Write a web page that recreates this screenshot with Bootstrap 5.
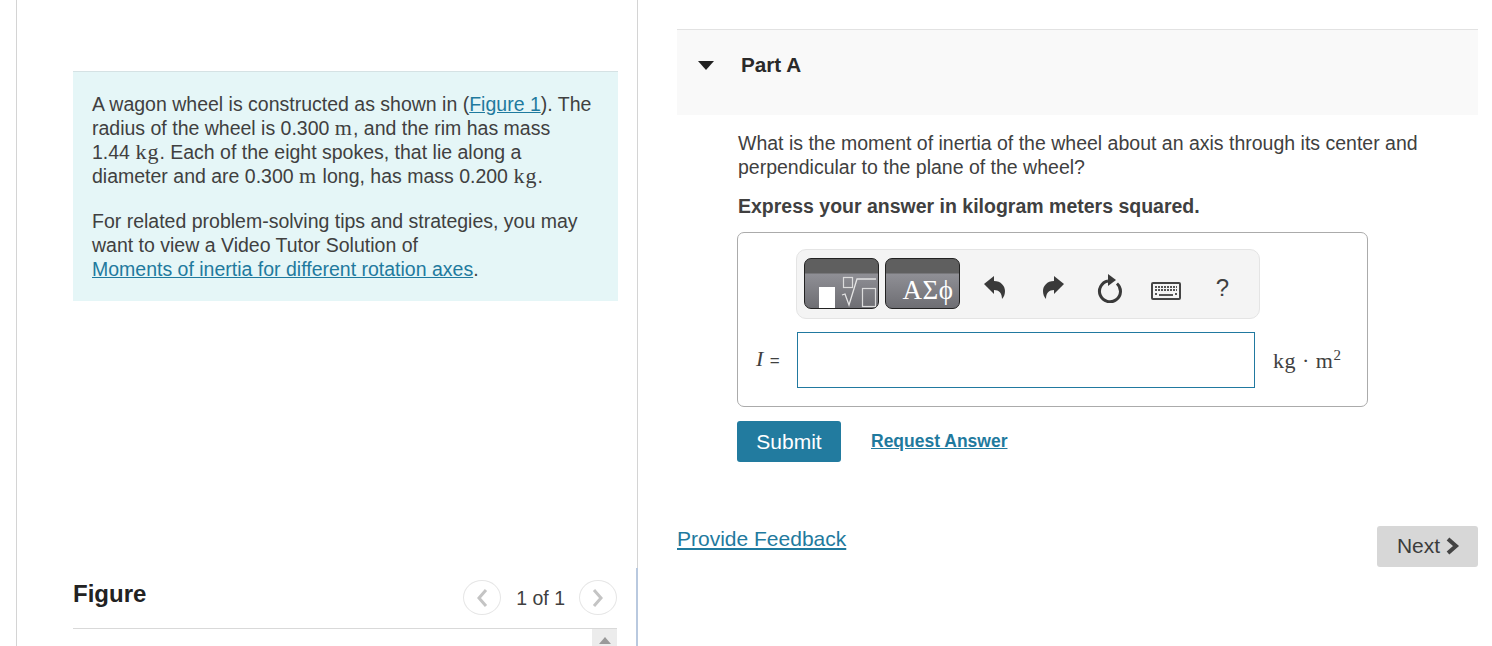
<!DOCTYPE html>
<html lang="en">
<head>
    <meta charset="UTF-8">
    <meta name="viewport" content="width=device-width, initial-scale=1.0">
    <title>Part A</title>
    <link href="https://cdn.jsdelivr.net/npm/bootstrap@5.3.0/dist/css/bootstrap.min.css" rel="stylesheet">
    <style>
        html, body {
            height: 646px;
            overflow: hidden;
        }

        body {
            font-family: "Liberation Sans", Arial, sans-serif;
            font-size: 19.5px;
            line-height: 24px;
            color: #404040;
            background: #fff;
        }

        a {
            color: #1f7a9e;
        }

        .page-wrap {
            width: 1462px;
            height: 646px;
            margin-left: 16px;
        }

        .left-pane {
            position: relative;
            width: 622px;
            flex: none;
            padding: 71px 19px 0 56px;
            border-left: 1px solid #d4d4d4;
            border-right: 1px solid #d4d4d4;
        }

        .left-pane::after {
            content: "";
            position: absolute;
            right: -1px;
            top: 568px;
            bottom: 0;
            width: 2px;
            background: #b9c9df;
        }

        .intro-box {
            height: 230px;
            padding: 20px 19px 0;
            background: #e5f6f7;
            border-top: 1px solid #d5e2e4;
        }

        .intro-box p {
            margin-bottom: 21px;
        }

        .math {
            font-family: "Liberation Serif", "DejaVu Serif", serif;
            font-size: 22px;
            line-height: 1;
            letter-spacing: 1px;
        }

        .figure-head {
            margin-top: 275px;
            margin-right: 1px;
            height: 53px;
            padding-top: 4px;
            border-bottom: 1px solid #d9d9d9;
        }

        .figure-title {
            font-size: 24px;
            font-weight: 700;
            color: #222;
            line-height: 28px;
        }

        .page-btn {
            width: 38px;
            height: 35px;
            border: 1px solid #e6e6e6;
            border-radius: 50%;
        }

        .page-count {
            margin: 6px 14px 0 15px;
        }

        .scroll-up {
            width: 25px;
            height: 17px;
            margin-right: 1px;
            background: #ececec;
        }

        .right-pane {
            padding: 29px 0 0 39px;
        }

        .part-head {
            height: 86px;
            background: #f9f9f9;
            border-top: 1px solid #e2e2e2;
            padding: 23px 0 0 21px;
        }

        .part-title {
            margin-left: 27px;
            font-size: 20.7px;
            font-weight: 700;
            color: #2a2a2a;
        }

        .part-body {
            padding: 16px 0 0 60px;
        }

        .part-body p {
            margin-bottom: 15px;
            padding-left: 1px;
        }

        .answer-box {
            width: 631px;
            height: 175px;
            margin-top: 14px;
            padding: 16px 0 0 58px;
            border: 1px solid #ababab;
            border-radius: 7px;
        }

        .tool-strip {
            width: 464px;
            height: 70px;
            padding: 8px 7px;
            background: #f4f4f4;
            border: 1px solid #e4e4e4;
            border-radius: 10px;
        }

        .palette-btn {
            position: relative;
            flex: none;
            width: 75px;
            height: 51px;
            margin-right: 6px;
            padding: 0;
            overflow: hidden;
            color: #fff;
            border: 1px solid #222;
            border-radius: 7px;
            background: linear-gradient(#5f5f5f 0, #5f5f5f 14px, #8f8f95 15px, #6e6e73 100%);
        }

        .palette-last {
            margin-right: 5px;
        }

        .palette-text {
            position: absolute;
            left: 11px;
            right: 0;
            bottom: 3px;
            font-family: "Liberation Serif", "DejaVu Serif", serif;
            font-size: 27px;
            line-height: 30px;
            letter-spacing: .5px;
            text-align: center;
        }

        .tool-icon {
            flex: none;
            margin-top: 16px;
            text-align: center;
        }

        .tool-undo {
            width: 59px;
        }

        .tool-redo {
            width: 58px;
        }

        .tool-reload {
            width: 56px;
        }

        .tool-keys {
            width: 56px;
            margin-top: 19px;
        }

        .tool-help {
            width: 57px;
            margin-top: 18px;
            font-size: 24px;
        }

        .answer-row {
            margin: 13px 0 0 -41px;
        }

        .var-label {
            width: 42px;
            padding-left: 1px;
        }

        .var-eq {
            font-size: 17px;
        }

        .answer-input {
            width: 458px;
            height: 56px;
            border: 1px solid #2179a0;
            border-radius: 0;
        }

        .unit-label {
            margin: 2px 0 0 18px;
            font-family: "Liberation Serif", "DejaVu Serif", serif;
            font-size: 22px;
            letter-spacing: .5px;
        }

        .unit-label sup {
            font-size: 15px;
            top: -8px;
        }

        .btn-submit {
            width: 104px;
            height: 41px;
            padding: 0;
            font-size: 21px;
            background: #227b9f;
            border: 0;
            border-radius: 3px;
            color: #fff;
        }

        .request-link {
            margin: 0 0 2px 30px;
            font-size: 17.5px;
            font-weight: 700;
        }

        .submit-row {
            margin-top: 14px;
        }

        .foot-row {
            margin-top: 64px;
        }

        .feedback-link {
            margin-top: 1px;
            font-size: 21px;
        }

        .btn-next {
            width: 101px;
            height: 41px;
            padding: 0 0 2px;
            font-size: 21px;
            background: #d7d7d7;
            border: 0;
            border-radius: 3px;
            color: #3c3c3c;
        }

        .btn-next svg {
            margin-left: 2px;
            margin-right: -2px;
        }
    </style>
</head>
<body>
    <div class="page-wrap d-flex">
        <!-- Left pane -->
        <div class="left-pane">
            <div class="intro-box">
                <p>A wagon wheel is constructed as shown in (<a href="#">Figure 1</a>). The radius of the wheel is 0.300 <span class="math">m</span>, and the rim has mass<br>1.44 <span class="math">kg</span>. Each of the eight spokes, that lie along a diameter and are 0.300 <span class="math">m</span> long, has mass 0.200 <span class="math">kg</span>.</p>
                <p>For related problem-solving tips and strategies, you may want to view a Video Tutor Solution of<br><a href="#">Moments of inertia for different rotation axes</a>.</p>
            </div>
            <div class="figure-head d-flex justify-content-between">
                <div class="figure-title">Figure</div>
                <div class="d-flex align-items-start">
                    <span class="page-btn d-flex align-items-center justify-content-center">
                        <svg width="12" height="20" viewBox="0 0 12 20"><path d="M10 2 3 10l7 8" fill="none" stroke="#c4c4c4" stroke-width="3"/></svg>
                    </span>
                    <span class="page-count">1 of 1</span>
                    <span class="page-btn d-flex align-items-center justify-content-center">
                        <svg width="12" height="20" viewBox="0 0 12 20"><path d="m2 2 7 8-7 8" fill="none" stroke="#c4c4c4" stroke-width="3"/></svg>
                    </span>
                </div>
            </div>
            <div class="d-flex justify-content-end">
                <div class="scroll-up d-flex justify-content-center pt-2">
                    <svg width="12" height="7" viewBox="0 0 12 7"><path d="M6 0l6 7H0z" fill="#9a9a9a"/></svg>
                </div>
            </div>
        </div>

        <!-- Right pane -->
        <div class="right-pane flex-grow-1">
            <div class="part-head d-flex align-items-start">
                <svg class="mt-2" width="16" height="9" viewBox="0 0 16 9"><path d="M0 0h16L8 9z" fill="#222"/></svg>
                <span class="part-title">Part A</span>
            </div>
            <div class="part-body">
                <p>What is the moment of inertia of the wheel about an axis through its center and perpendicular to the plane of the wheel?</p>
                <p class="fw-bold mb-0">Express your answer in kilogram meters squared.</p>
                <div class="answer-box">
                    <div class="tool-strip d-flex align-items-start">
                        <button class="palette-btn" type="button" aria-label="Templates">
                            <svg class="d-block" width="73" height="49" viewBox="0 0 73 49">
                                <rect x="14" y="28" width="16" height="21" fill="#fff"/>
                                <rect x="38.5" y="18.5" width="9" height="10" fill="none" stroke="#dcdcdc" stroke-width="1.2"/>
                                <path d="M37 36l3-1 4 11 8-26h19" fill="none" stroke="#e4e4e4" stroke-width="1.3"/>
                                <rect x="57.5" y="29.5" width="13" height="18" fill="none" stroke="#dcdcdc" stroke-width="1.2"/>
                            </svg>
                        </button>
                        <button class="palette-btn palette-last" type="button"><span class="palette-text">ΑΣϕ</span></button>
                        <span class="tool-icon tool-undo">
                            <svg width="22" height="24" viewBox="0 0 22 24"><path d="M0 8 10 0v5c7 0 11 5 11 10 0 3-1 6-3 8 0-6-3-9-8-9v4z" fill="#3a3a3a"/></svg>
                        </span>
                        <span class="tool-icon tool-redo">
                            <svg width="22" height="24" viewBox="0 0 22 24"><path d="M22 8 12 0v5C5 5 1 10 1 15c0 3 1 6 3 8 0-6 3-9 8-9v4z" fill="#3a3a3a"/></svg>
                        </span>
                        <span class="tool-icon tool-reload">
                            <svg width="26" height="29" viewBox="0 0 26 29"><path d="M11 7A10.500 10.500 0 1 0 20 9.500" fill="none" stroke="#3a3a3a" stroke-width="3"/><path d="M11 0l8 6-8 6z" fill="#3a3a3a"/></svg>
                        </span>
                        <span class="tool-icon tool-keys">
                            <svg width="30" height="18" viewBox="0 0 30 18"><rect x="1" y="1" width="28" height="16" rx="1" fill="#f4f4f4" stroke="#444" stroke-width="2"/><path d="M4 5h22M4 8h22" stroke="#555" stroke-width="2" stroke-dasharray="2 1"/><path d="M4 12h2M8 13h14M24 12h2" stroke="#555" stroke-width="2"/></svg>
                        </span>
                        <span class="tool-icon tool-help">?</span>
                    </div>
                    <div class="answer-row d-flex align-items-center">
                        <span class="var-label text-nowrap"><span class="math fst-italic">I</span> <span class="var-eq">=</span></span>
                        <input class="answer-input" type="text" aria-label="I">
                        <span class="unit-label text-nowrap">kg · m<sup>2</sup></span>
                    </div>
                </div>
                <div class="submit-row d-flex align-items-center">
                    <button class="btn btn-submit" type="button">Submit</button>
                    <a class="request-link" href="#">Request Answer</a>
                </div>
            </div>
            <div class="foot-row d-flex justify-content-between align-items-start">
                <a class="feedback-link" href="#">Provide Feedback</a>
                <button class="btn btn-next d-flex align-items-center justify-content-center gap-1" type="button">Next
                    <svg width="14" height="18" viewBox="0 0 14 18"><path d="M2 2l8 7-8 7" fill="none" stroke="#444" stroke-width="4"/></svg>
                </button>
            </div>
        </div>
    </div>

    <script src="https://cdn.jsdelivr.net/npm/bootstrap@5.3.0/dist/js/bootstrap.bundle.min.js"></script>
</body>
</html>
